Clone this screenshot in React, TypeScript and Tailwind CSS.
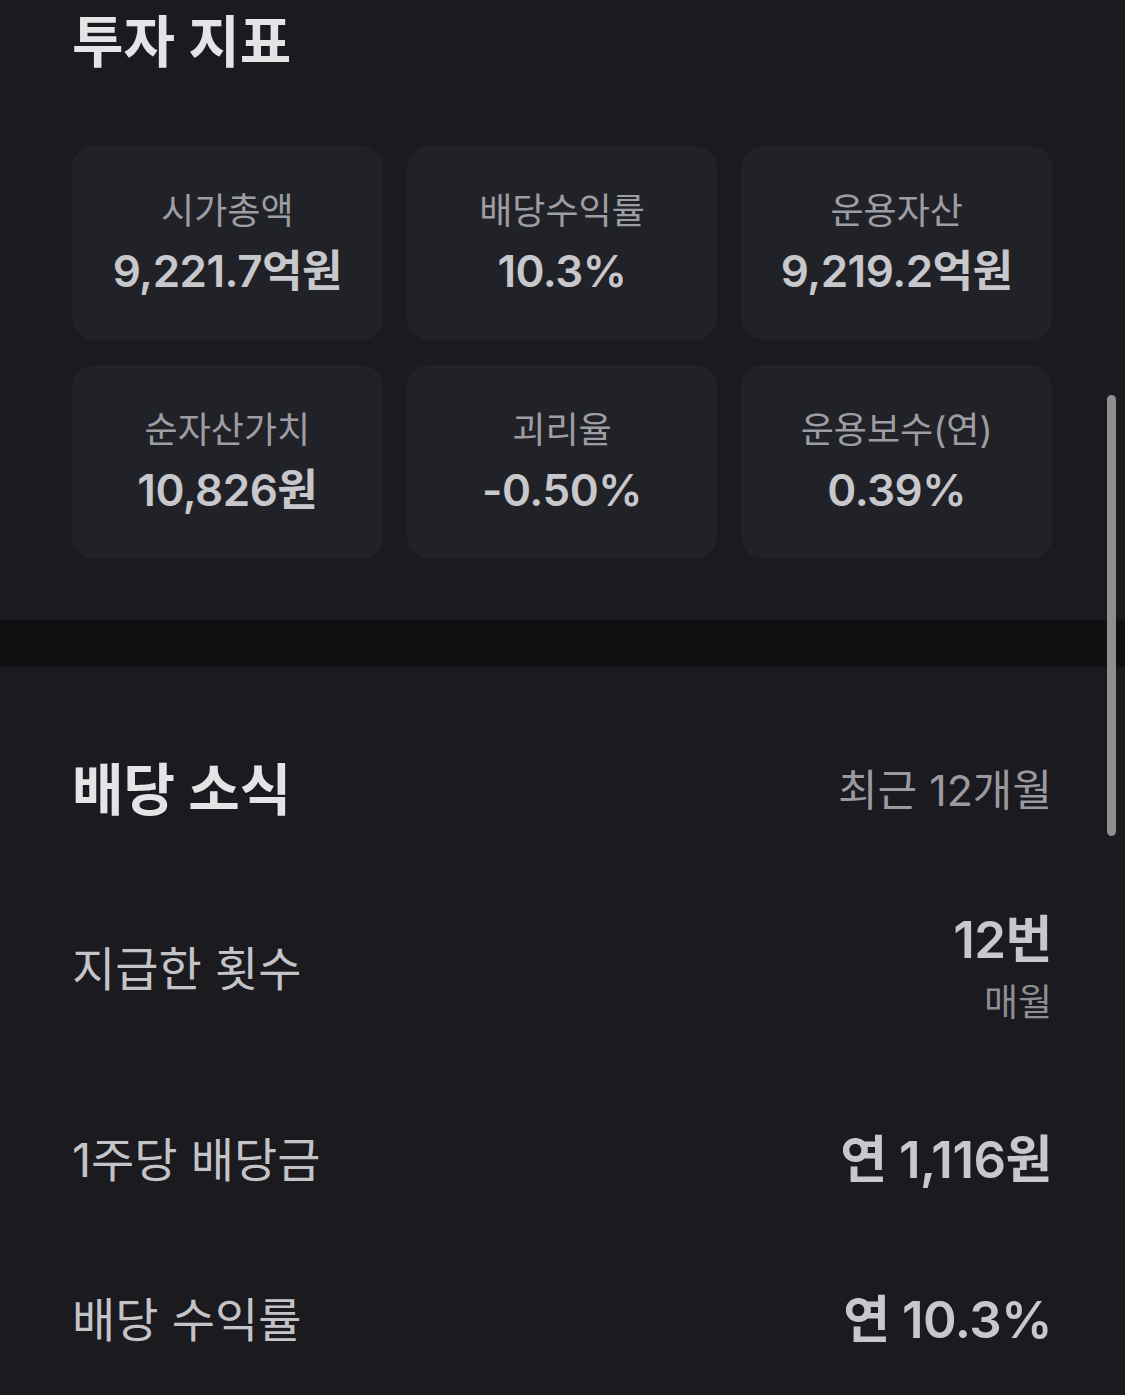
import React from "react";

const font = { fontFamily: '"Inter", "Noto Sans CJK KR", sans-serif' };

const cards = [
  { label: "시가총액", value: "9,221.7억원" },
  { label: "배당수익률", value: "10.3%" },
  { label: "운용자산", value: "9,219.2억원" },
  { label: "순자산가치", value: "10,826원" },
  { label: "괴리율", value: "-0.50%" },
  { label: "운용보수(연)", value: "0.39%" },
];

export default function App() {
  return (
    <div className="relative w-[1125px] h-[1395px] overflow-hidden bg-[#1a1a1f]" style={font}>
      <div className="pl-[72px] pr-[73px]">
        <h1 className="mt-[14px] h-[56px] text-[56px] leading-[56px] font-bold text-[#e4e4e7]">
          투자 지표
        </h1>
        <div className="mt-[76px] grid grid-cols-3 gap-x-[24px] gap-y-[25px]">
          {cards.map((c) => (
            <div
              key={c.label}
              className="h-[194px] rounded-[22px] bg-[#212228] flex flex-col items-center justify-center"
            >
              <div className="text-[36px] leading-[44px] text-[#9d9da3]">{c.label}</div>
              <div className="mt-[12px] text-[44px] leading-[52px] font-semibold text-[#c7c7cc] tracking-[-0.5px]">
                {c.value}
              </div>
            </div>
          ))}
        </div>
      </div>
      <div className="mt-[61px] h-[47px] bg-[#101012]" />
      <div className="pl-[72px] pr-[73px]">
        <div className="mt-[95px] flex items-center justify-between h-[56px]">
          <h2 className="text-[56px] leading-[56px] font-bold text-[#e4e4e7]">배당 소식</h2>
          <span className="text-[43px] leading-[50px] text-[#9a9aa0]">최근 12개월</span>
        </div>
        <div className="mt-[94px] flex items-center justify-between">
          <span className="text-[47px] leading-[56px] text-[#c3c3c8]">지급한 횟수</span>
          <div className="flex flex-col items-end">
            <span className="text-[51px] leading-[56px] font-semibold text-[#c7c7cc] tracking-[-0.5px]">12번</span>
            <span className="mt-[13px] text-[37px] leading-[44px] text-[#8e8e93]">매월</span>
          </div>
        </div>
        <div className="mt-[107px] flex items-center justify-between h-[56px]">
          <span className="text-[47px] leading-[56px] text-[#c3c3c8]">1주당 배당금</span>
          <span className="text-[51px] leading-[56px] font-semibold text-[#c7c7cc] tracking-[-0.5px]">연 1,116원</span>
        </div>
        <div className="mt-[104px] flex items-center justify-between h-[56px]">
          <span className="text-[47px] leading-[56px] text-[#c3c3c8]">배당 수익률</span>
          <span className="text-[51px] leading-[56px] font-semibold text-[#c7c7cc] tracking-[-0.5px]">연 10.3%</span>
        </div>
      </div>
      <div className="absolute left-[1107px] top-[395px] w-[9px] h-[441px] rounded-full bg-[#8e8e8e]" />
    </div>
  );
}
